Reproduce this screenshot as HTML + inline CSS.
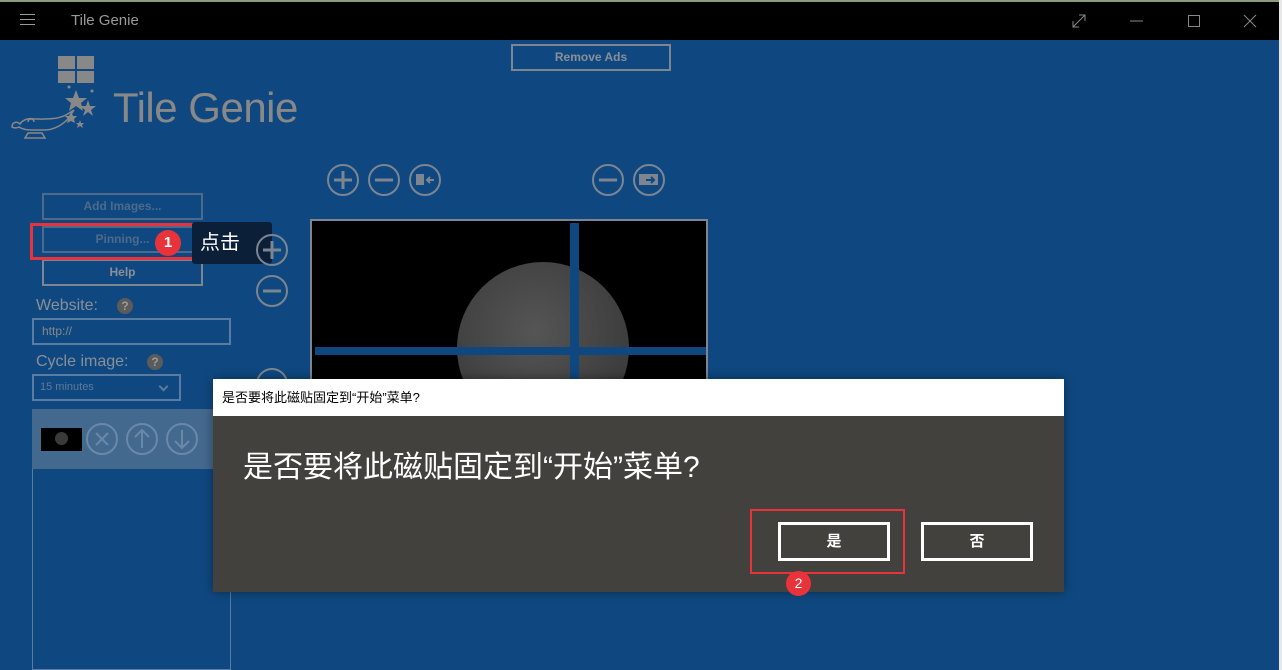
<!DOCTYPE html>
<html><head><meta charset="utf-8"><style>
*{margin:0;padding:0;box-sizing:border-box}
body{width:1282px;height:670px;overflow:hidden;background:#0f4880;font-family:"Liberation Sans","Noto Sans CJK SC",sans-serif;position:relative}
.a{position:absolute}
.btn{position:absolute;border:2px solid #7c8590;color:#8a8f96;font-size:12px;font-weight:bold;text-align:center}
.lbl{position:absolute;color:#8a8f96;font-size:16px}
.q{position:absolute;width:16px;height:16px;border-radius:50%;background:#5b5b5b;color:#9a9a9a;font-size:12px;font-weight:bold;text-align:center;line-height:16px}
</style></head><body>
<div class="a" style="left:0;top:0;width:1282px;height:2px;background:#8a9a80"></div>
<div class="a" style="left:0;top:2px;width:1279px;height:38px;background:#000"></div>
<div class="a" style="left:1279px;top:0;width:3px;height:670px;background:#e8e8e8"></div>
<div class="a" style="left:20px;top:14px;width:15px;height:1px;background:#999;box-shadow:0 5px 0 #999,0 10px 0 #999"></div>
<div class="a" style="left:71px;top:12px;color:#999;font-size:15px">Tile Genie</div>
<svg class="a" style="left:1070px;top:10px" width="200" height="22" stroke="#888" fill="none" stroke-width="1">
<path d="M3 17L15 5M9 5h6v6M3 11v6h6"/><path d="M60 11h13"/><rect x="118.5" y="5.5" width="11" height="11"/><path d="M174 5l12 12M186 5l-12 12"/></svg>
<div class="btn" style="left:511px;top:44px;width:160px;height:27px;line-height:23px">Remove Ads</div>
<svg class="a" style="left:8px;top:54px" width="100" height="90" fill="#888">
<rect x="50" y="2" width="17" height="13"/><rect x="69" y="2" width="17" height="13"/><rect x="50" y="17" width="17" height="12"/><rect x="69" y="17" width="17" height="12"/>
<polygon points="68,36 71,44 79,44 73,49 75,57 68,52 61,57 63,49 57,44 65,44"/>
<polygon points="80,46 82,52 88,52 83,56 85,62 80,58 75,62 77,56 72,52 78,52"/>
<polygon points="63,58 65,62 69,62 66,65 67,69 63,67 59,69 60,65 57,62 61,62"/>
<polygon points="72,66 73,69 76,69 74,71 75,74 72,72 69,74 70,71 68,69 71,69"/>
<circle cx="61" cy="33" r="1.5"/><circle cx="84" cy="37" r="1.5"/>
<path d="M4 73c0-5 5-6 8-3 3-5 10-6 14-5 10 0 22 1 32-4l8-5-6 9c-6 6-14 11-24 11H24c-6 0-10-1-13-3-4 2-7 0-7 0z" fill="none" stroke="#888" stroke-width="1.5"/>
<path d="M20 68c0-4 6-4 6 0" fill="none" stroke="#888" stroke-width="1.5"/>
<path d="M20 79h14l3 5H17z" fill="none" stroke="#888" stroke-width="1.5"/></svg>
<div class="a" style="left:113px;top:84px;color:#888;font-size:42px;font-family:'Liberation Sans',sans-serif;letter-spacing:-0.5px">Tile Genie</div>
<div class="btn" style="left:42px;top:193px;width:161px;height:27px;line-height:23px;color:#4e6a8a;border-color:#4e6a8a">Add Images...</div>
<div class="btn" style="left:42px;top:226px;width:161px;height:27px;line-height:23px;color:#4e6a8a;border-color:#4e6a8a">Pinning...</div>
<div class="btn" style="left:42px;top:259px;width:161px;height:27px;line-height:23px">Help</div>
<div class="a" style="left:30px;top:223px;width:183px;height:37px;border:3px solid #e8333a"></div>
<div class="a" style="left:155px;top:230px;width:26px;height:26px;border-radius:50%;background:#e8333a;color:#fff;font-size:15px;text-align:center;line-height:26px;font-weight:bold">1</div>
<div class="a" style="left:186px;top:236px;width:0;height:0;border:7px solid transparent;border-right-color:#0b2038"></div>
<div class="a" style="left:192px;top:222px;width:80px;height:42px;background:#0b2038;border-radius:3px;color:#fff;font-size:20px;line-height:42px;padding-left:8px">点击</div>
<div class="lbl" style="left:36px;top:297px">Website:</div>
<div class="q" style="left:117px;top:298px">?</div>
<div class="a" style="left:32px;top:318px;width:199px;height:27px;border:2px solid #5a7ca0;color:#888;font-size:12px;padding:4px 8px">http://</div>
<div class="lbl" style="left:36px;top:353px">Cycle image:</div>
<div class="q" style="left:147px;top:354px">?</div>
<div class="a" style="left:32px;top:374px;width:149px;height:27px;border:2px solid #5a7ca0;color:#5d7a9c;font-size:11px;padding:5px 6px">15 minutes</div>
<div class="a" style="left:160px;top:383px;width:7px;height:7px;border-right:2px solid #5d7a9c;border-bottom:2px solid #5d7a9c;transform:rotate(45deg)"></div>
<div class="a" style="left:32px;top:409px;width:199px;height:261px;border:1px solid #5a7ca0;border-top:0"></div>
<div class="a" style="left:32px;top:409px;width:199px;height:60px;background:#44698f"></div>
<div class="a" style="left:41px;top:428px;width:41px;height:23px;background:#000"><div class="a" style="left:14px;top:4px;width:13px;height:13px;border-radius:50%;background:#3a3a3a"></div></div>
<svg class="a" style="left:85px;top:422px" width="120" height="34" fill="none" stroke="#6a88a8" stroke-width="2">
<circle cx="17" cy="17" r="15"/><path d="M11 11l12 12M23 11l-12 12"/>
<circle cx="57" cy="17" r="15"/><path d="M57 26V9M50 15l7-7 7 7"/>
<circle cx="97" cy="17" r="15"/><path d="M97 8v17M90 19l7 7 7-7"/></svg>
<svg class="a" style="left:250px;top:160px" width="430" height="240" fill="none" stroke="#7c8590" stroke-width="2">
<circle cx="93" cy="20" r="15"/><path d="M84 20h18M93 11v18" stroke-width="3"/>
<circle cx="134" cy="20" r="15"/><path d="M125 20h18" stroke-width="3"/>
<circle cx="175" cy="20" r="15"/><rect x="166" y="14" width="8" height="11" fill="#7c8590" stroke="none"/><path d="M184 20h-7M180 17l-3 3 3 3"/>
<circle cx="358" cy="20" r="15"/><path d="M349 20h18" stroke-width="3"/>
<circle cx="399" cy="20" r="15"/><rect x="389" y="14" width="19" height="11" fill="#7c8590" stroke="none"/><path d="M396 20h8M401 17l3 3-3 3" stroke="#0f4880"/>
<circle cx="22" cy="90" r="15"/><path d="M13 90h18M22 81v18" stroke-width="3"/>
<circle cx="22" cy="131" r="15"/><path d="M13 131h18" stroke-width="3"/>
<circle cx="22" cy="224" r="15"/></svg>
<div class="a" style="left:310px;top:219px;width:398px;height:170px;border:2px solid #7c8590;background:#000;overflow:hidden">
<div class="a" style="left:145px;top:41px;width:172px;height:172px;border-radius:50%;background:radial-gradient(circle at 45% 40%,#555,#404040 60%,#333)"></div>
<div class="a" style="left:258px;top:2px;width:9px;height:170px;background:#0f4880"></div>
<div class="a" style="left:3px;top:126px;width:392px;height:8px;background:#0f4880"></div>
</div>
<div class="a" style="left:213px;top:379px;width:851px;height:213px;background:#43413d;box-shadow:0 0 10px rgba(0,0,0,.4)"></div>
<div class="a" style="left:213px;top:379px;width:851px;height:37px;background:#fff;color:#000;font-size:13px;line-height:37px;padding-left:9px">是否要将此磁贴固定到“开始”菜单?</div>
<div class="a" style="left:243px;top:442px;color:#fff;font-size:30px">是否要将此磁贴固定到“开始”菜单?</div>
<div class="a" style="left:778px;top:522px;width:112px;height:39px;border:3px solid #fff;color:#fff;font-size:15px;font-weight:bold;text-align:center;line-height:33px">是</div>
<div class="a" style="left:921px;top:522px;width:112px;height:39px;border:3px solid #fff;color:#fff;font-size:15px;font-weight:bold;text-align:center;line-height:33px">否</div>
<div class="a" style="left:750px;top:509px;width:155px;height:65px;border:2px solid #e8333a"></div>
<div class="a" style="left:786px;top:571px;width:25px;height:25px;border-radius:50%;background:#e8333a;color:#fff;font-size:14px;text-align:center;line-height:25px">2</div>
</body></html>
